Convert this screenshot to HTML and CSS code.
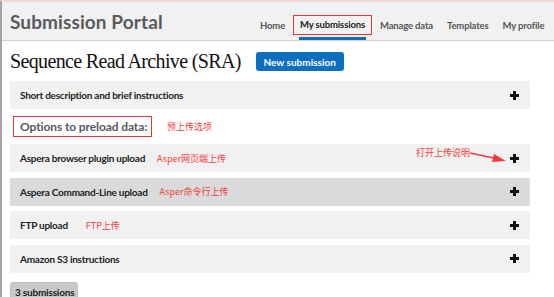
FILE: index.html
```html
<!DOCTYPE html>
<html>
<head>
<meta charset="utf-8">
<link rel="stylesheet" href="styles.css">
</head>
<body>
<div class="page">
  <header class="header">
    <div class="brand">Submission Portal</div>
    <nav class="nav">
      <span class="nav-item">Home</span>
      <span class="nav-item active"><span class="nav-label">My submissions</span></span>
      <span class="nav-item">Manage data</span>
      <span class="nav-item">Templates</span>
      <span class="nav-item">My profile</span>
    </nav>
  </header>
  <main class="main">
    <div class="title-row">
      <h1 class="title">Sequence Read Archive (SRA)</h1>
      <span class="btn">New submission</span>
    </div>
    <div class="row first">
      <span class="row-label">Short description and brief instructions</span>
      <span class="plus"></span>
    </div>
    <div class="options">
      <span class="options-box">Options to preload data:</span>
      <span class="note note-options">预上传选项</span>
    </div>
    <div class="rows">
      <div class="row callout-row">
        <span class="row-label">Aspera browser plugin upload</span>
        <span class="note note-gap">Asper网页端上传</span>
        <span class="plus"></span>
        <span class="callout">打开上传说明</span>
        <svg class="arrow" width="40" height="14" viewBox="0 0 40 14">
          <path d="M0 2 L28 8" stroke="#f23c3c" stroke-width="1.6" fill="none"/>
          <path d="M24 3 L36 10 L22 11 Z" fill="#f23c3c"/>
        </svg>
      </div>
      <div class="row dark">
        <span class="row-label">Aspera Command-Line upload</span>
        <span class="note note-gap">Asper命令行上传</span>
        <span class="plus"></span>
      </div>
      <div class="row">
        <span class="row-label">FTP upload</span>
        <span class="note note-ftp">FTP上传</span>
        <span class="plus"></span>
      </div>
      <div class="row">
        <span class="row-label">Amazon S3 instructions</span>
        <span class="plus"></span>
      </div>
    </div>
    <div class="badge">3 submissions</div>
  </main>
</div>
</body>
</html>
```
FILE: styles.css
```css
* { box-sizing: border-box; }
html, body { margin: 0; padding: 0; }
body {
  background: #fff;
  font-family: "Lato", "Noto Sans CJK SC", sans-serif;
  color: #222;
  width: 554px;
  height: 297px;
  overflow: hidden;
  white-space: nowrap;
}
.page {
  border-top: 2px solid #f5d6d6;
  border-left: 2px solid #a3a3a3;
  height: 297px;
}
.header {
  height: 39px;
  background: #f1f1f1;
  border-bottom: 1px solid #cfcfcf;
  display: flex;
  align-items: flex-end;
  padding-left: 8px;
}
.brand {
  font-size: 19px;
  font-weight: 700;
  color: #585b60;
  letter-spacing: 0.1px;
  padding-bottom: 7px;
  width: 250px;
  flex: none;
}
.nav {
  display: flex;
  align-items: flex-end;
  gap: 14px;
  font-size: 9.5px;
  font-weight: 700;
  color: #555;
  letter-spacing: -0.15px;
}
.nav-item {
  padding-bottom: 9px;
  flex: none;
}
.nav-item.active {
  color: #222;
  position: relative;
  padding: 0;
  margin: 0 -6px;
}
.nav-item.active .nav-label {
  display: block;
  border: 1.5px solid #e8323a;
  padding: 3px 6px 4px;
  margin-bottom: 5px;
}
.nav-item.active::after {
  content: "";
  position: absolute;
  left: 6px;
  right: 6px;
  bottom: 0;
  height: 3px;
  background: #0b6fb8;
}
.main {
  padding: 9px 0 0 8px;
  width: 528px;
}
.title-row {
  display: flex;
  align-items: center;
  gap: 15px;
  height: 23px;
}
.title {
  margin: 0;
  font-family: "Liberation Serif", serif;
  font-weight: 400;
  font-size: 20px;
  color: #111;
  letter-spacing: -0.65px;
}
.btn {
  background: #0d6fbf;
  color: #fff;
  font-size: 10px;
  font-weight: 700;
  border-radius: 3px;
  height: 19px;
  width: 88px;
  display: flex;
  align-items: center;
  justify-content: center;
}
.row {
  height: 28px;
  background: #f1f1f1;
  display: flex;
  align-items: center;
  padding: 0 11px 0 10px;
  position: relative;
}
.row.first { margin-top: 8px; }
.row.dark { background: #d9dadb; }
.row-label {
  font-size: 10px;
  font-weight: 700;
  color: #222;
  letter-spacing: -0.25px;
}
.plus {
  margin-left: auto;
  width: 9px;
  height: 9px;
  background:
    linear-gradient(#111, #111) center / 9px 3px no-repeat,
    linear-gradient(#111, #111) center / 3px 9px no-repeat;
}
.options {
  height: 35px;
  display: flex;
  align-items: center;
  padding-left: 3px;
}
.options-box {
  border: 1.5px solid #e8323a;
  height: 21px;
  width: 139px;
  display: flex;
  align-items: center;
  padding-left: 6px;
  font-size: 12px;
  font-weight: 700;
  color: #555a60;
  letter-spacing: -0.1px;
}
.note {
  font-family: "Noto Sans CJK SC", sans-serif;
  font-size: 9px;
  color: #f23c3c;
}
.note-options { margin-left: 15px; }
.note-gap { margin-left: 12px; }
.note-ftp { margin-left: 18px; }
.rows {
  display: flex;
  flex-direction: column;
  gap: 5.5px;
}
.callout {
  position: absolute;
  left: 406px;
  top: 2px;
  font-family: "Noto Sans CJK SC", sans-serif;
  font-size: 9px;
  color: #f23c3c;
}
.arrow {
  position: absolute;
  left: 460px;
  top: 7px;
}
.badge {
  margin-top: 9px;
  width: 68px;
  height: 20px;
  background: #c9c9c9;
  border: 1px solid #bdbdbd;
  border-radius: 3px;
  font-size: 10px;
  font-weight: 700;
  color: #222;
  padding: 3px 0 0 4px;
  letter-spacing: -0.2px;
}
```
